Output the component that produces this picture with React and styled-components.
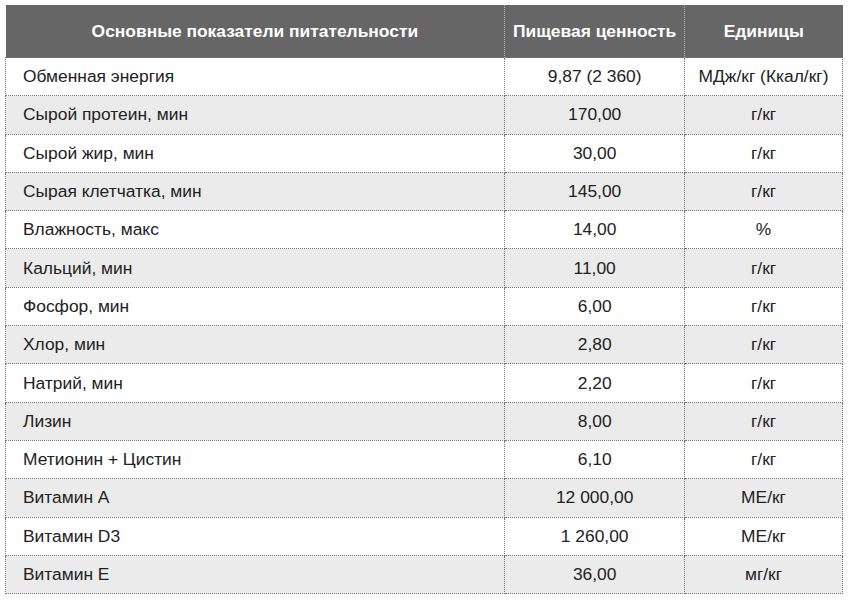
import React from "react";
import styled, { createGlobalStyle } from "styled-components";

const Global = createGlobalStyle`
  body {
    margin: 0;
    padding: 5px;
    background: #fff;
    font-family: "Liberation Sans", Arial, sans-serif;
  }
`;

const Table = styled.table`
  width: 838px;
  border-collapse: collapse;
  font-size: 17.4px;
  color: #222;
`;

const Th = styled.th`
  background: #666;
  color: #fff;
  font-weight: bold;
  height: 52px;
  padding: 0 4px;
  text-align: center;
  border-left: 1px dotted #bbb;
  &:first-child {
    border-left: none;
  }
`;

const Row = styled.tr`
  background: ${(p) => (p.$even ? "#ebebeb" : "#fff")};
`;

const Td = styled.td`
  height: 37.3px;
  padding: 0 ${(p) => (p.$center ? "4px" : "17px")};
  border: 1px dotted #777;
  white-space: nowrap;
  text-align: ${(p) => (p.$center ? "center" : "left")};
`;

const rows = [
  ["Обменная энергия", "9,87 (2 360)", "МДж/кг (Ккал/кг)"],
  ["Сырой протеин, мин", "170,00", "г/кг"],
  ["Сырой жир, мин", "30,00", "г/кг"],
  ["Сырая клетчатка, мин", "145,00", "г/кг"],
  ["Влажность, макс", "14,00", "%"],
  ["Кальций, мин", "11,00", "г/кг"],
  ["Фосфор, мин", "6,00", "г/кг"],
  ["Хлор, мин", "2,80", "г/кг"],
  ["Натрий, мин", "2,20", "г/кг"],
  ["Лизин", "8,00", "г/кг"],
  ["Метионин + Цистин", "6,10", "г/кг"],
  ["Витамин A", "12 000,00", "МЕ/кг"],
  ["Витамин D3", "1 260,00", "МЕ/кг"],
  ["Витамин E", "36,00", "мг/кг"],
];

export default function App() {
  return (
    <>
      <Global />
      <Table>
        <colgroup>
          <col style={{ width: 500 }} />
          <col style={{ width: 180 }} />
          <col style={{ width: 158 }} />
        </colgroup>
        <thead>
          <tr>
            <Th>Основные показатели питательности</Th>
            <Th>Пищевая ценность</Th>
            <Th>Единицы</Th>
          </tr>
        </thead>
        <tbody>
          {rows.map((r, i) => (
            <Row key={i} $even={i % 2 === 1}>
              <Td>{r[0]}</Td>
              <Td $center>{r[1]}</Td>
              <Td $center>{r[2]}</Td>
            </Row>
          ))}
        </tbody>
      </Table>
    </>
  );
}
